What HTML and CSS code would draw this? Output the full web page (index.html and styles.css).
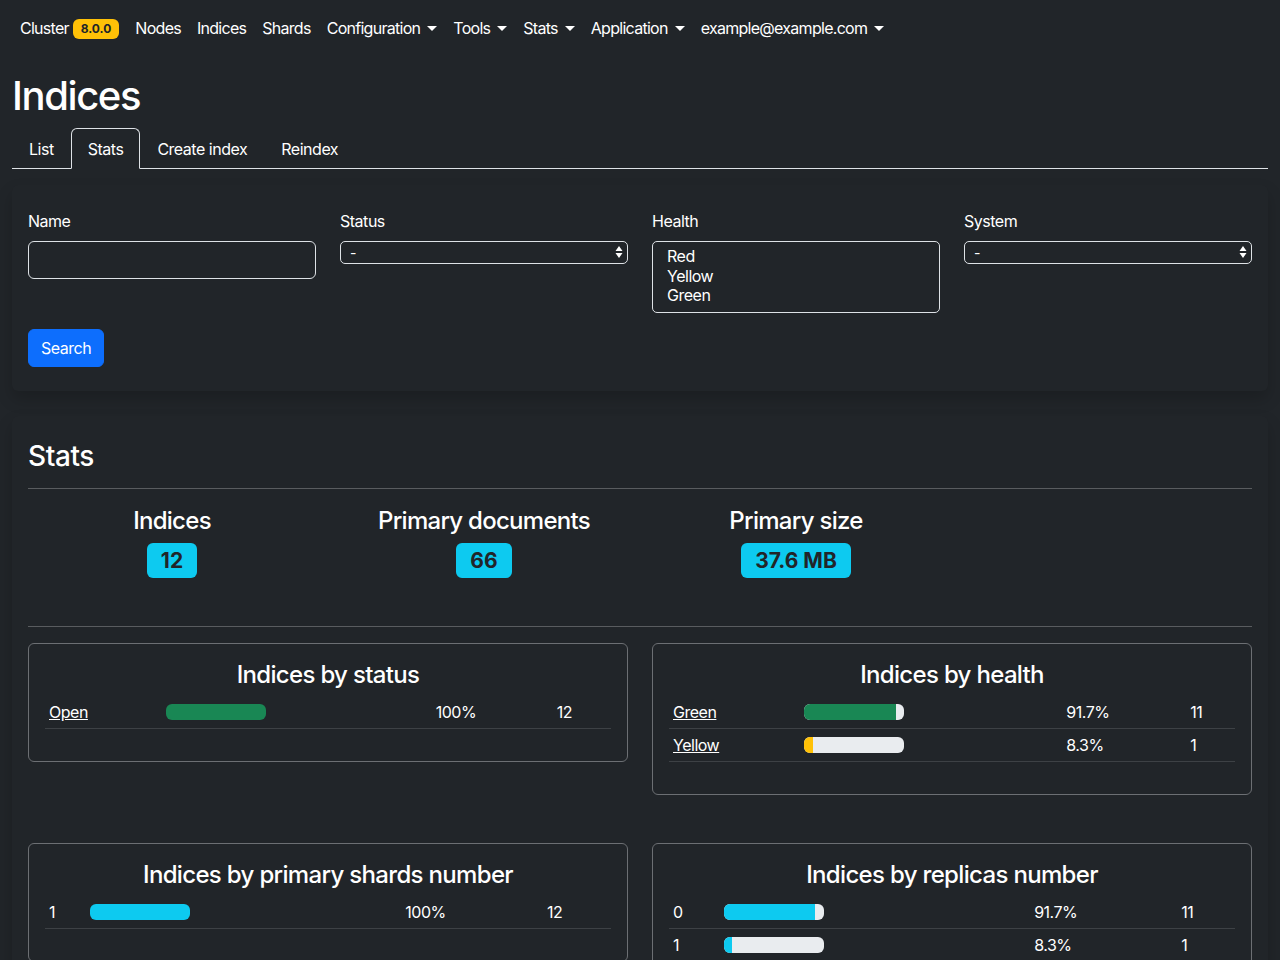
FILE: index.html
```html
<!DOCTYPE html>
<html lang="en">
<head>
<meta charset="utf-8">
<title>Indices - Stats</title>
<link rel="stylesheet" href="styles.css">
</head>
<body>
<nav class="navbar">
  <ul class="nav-list">
    <li><a class="nav-link" href="#">Cluster <span class="badge badge-warning">8.0.0</span></a></li>
    <li><a class="nav-link" href="#">Nodes</a></li>
    <li><a class="nav-link" href="#">Indices</a></li>
    <li><a class="nav-link" href="#">Shards</a></li>
    <li><a class="nav-link dropdown-toggle" href="#">Configuration</a></li>
    <li><a class="nav-link dropdown-toggle" href="#">Tools</a></li>
    <li><a class="nav-link dropdown-toggle" href="#">Stats</a></li>
    <li><a class="nav-link dropdown-toggle" href="#">Application</a></li>
    <li><a class="nav-link dropdown-toggle" href="#">example@example.com</a></li>
  </ul>
</nav>

<main class="container">
  <h1 class="page-title">Indices</h1>
  <ul class="nav-tabs">
    <li><a class="tab-link" href="#">List</a></li>
    <li><a class="tab-link active" href="#">Stats</a></li>
    <li><a class="tab-link" href="#">Create index</a></li>
    <li><a class="tab-link" href="#">Reindex</a></li>
  </ul>

  <section class="card card-form">
    <form class="filter-form">
      <div class="form-row">
        <div class="field">
          <label class="form-label" for="name">Name</label>
          <input class="form-control" id="name" type="text">
        </div>
        <div class="field">
          <label class="form-label" for="status">Status</label>
          <div class="select-wrap">
            <select class="native-select" id="status"><option>-</option><option>Open</option><option>Close</option></select>
            <svg class="select-arrows" width="8" height="14" viewBox="0 0 8 14" aria-hidden="true"><path d="M4 1 L7.5 6 L0.5 6 Z M0.5 8 L7.5 8 L4 13 Z" fill="#fff"/></svg>
          </div>
        </div>
        <div class="field">
          <label class="form-label">Health</label>
          <div class="listbox" role="listbox" aria-multiselectable="true">
            <div class="listbox-option" role="option">Red</div>
            <div class="listbox-option" role="option">Yellow</div>
            <div class="listbox-option" role="option">Green</div>
          </div>
        </div>
        <div class="field">
          <label class="form-label" for="system">System</label>
          <div class="select-wrap">
            <select class="native-select" id="system"><option>-</option><option>Yes</option><option>No</option></select>
            <svg class="select-arrows" width="8" height="14" viewBox="0 0 8 14" aria-hidden="true"><path d="M4 1 L7.5 6 L0.5 6 Z M0.5 8 L7.5 8 L4 13 Z" fill="#fff"/></svg>
          </div>
        </div>
      </div>
      <button class="btn-primary" type="button">Search</button>
    </form>
  </section>

  <section class="card card-stats">
    <h3 class="section-title">Stats</h3>
    <hr class="divider divider-top">
    <div class="stats-row">
      <div class="stat">
        <h4 class="stat-label">Indices</h4>
        <span class="badge badge-info">12</span>
      </div>
      <div class="stat">
        <h4 class="stat-label">Primary documents</h4>
        <span class="badge badge-info">66</span>
      </div>
      <div class="stat">
        <h4 class="stat-label">Primary size</h4>
        <span class="badge badge-info">37.6 MB</span>
      </div>
    </div>
    <hr class="divider">

    <div class="charts">
      <div class="chart-card">
        <h4 class="chart-title">Indices by status</h4>
        <table class="table-sm">
          <tbody>
            <tr><td><a href="#">Open</a></td><td><div class="progress"><div class="bar bar-success" style="width:100%"></div></div></td><td>100%</td><td>12</td></tr>
          </tbody>
        </table>
      </div>
      <div class="chart-card">
        <h4 class="chart-title">Indices by health</h4>
        <table class="table-sm">
          <tbody>
            <tr><td><a href="#">Green</a></td><td><div class="progress"><div class="bar bar-success" style="width:91.7%"></div></div></td><td>91.7%</td><td>11</td></tr>
            <tr><td><a href="#">Yellow</a></td><td><div class="progress"><div class="bar bar-warning" style="width:8.3%"></div></div></td><td>8.3%</td><td>1</td></tr>
          </tbody>
        </table>
      </div>
      <div class="chart-card">
        <h4 class="chart-title">Indices by primary shards number</h4>
        <table class="table-sm">
          <tbody>
            <tr><td>1</td><td><div class="progress"><div class="bar bar-info" style="width:100%"></div></div></td><td>100%</td><td>12</td></tr>
          </tbody>
        </table>
      </div>
      <div class="chart-card">
        <h4 class="chart-title">Indices by replicas number</h4>
        <table class="table-sm">
          <tbody>
            <tr><td>0</td><td><div class="progress"><div class="bar bar-info" style="width:91.7%"></div></div></td><td>91.7%</td><td>11</td></tr>
            <tr><td>1</td><td><div class="progress"><div class="bar bar-info" style="width:8.3%"></div></div></td><td>8.3%</td><td>1</td></tr>
          </tbody>
        </table>
      </div>
    </div>
  </section>
</main>
</body>
</html>
```

FILE: styles.css
```css
* { box-sizing: border-box; }

html, body {
  margin: 0;
  padding: 0;
}

body {
  background: #212529;
  color: #fff;
  font-family: Inter, "Noto Sans", "Liberation Sans", sans-serif;
  font-size: 16px;
  line-height: 24px;
  letter-spacing: -0.03em;
}

a { color: inherit; }

/* Navbar */
.navbar {
  height: 56px;
  padding: 8px 12px;
  display: flex;
  align-items: center;
}
.nav-list {
  list-style: none;
  margin: 0;
  padding: 0;
  display: flex;
  align-items: center;
}
.nav-link {
  display: block;
  padding: 8px;
  color: #fff;
  text-decoration: none;
  line-height: 24px;
  letter-spacing: -0.045em;
}
.dropdown-toggle::after {
  content: "";
  display: inline-block;
  margin-left: 7px;
  vertical-align: 3px;
  border-top: 5px solid #fff;
  border-left: 5px solid transparent;
  border-right: 5px solid transparent;
}

.badge {
  display: inline-block;
  font-weight: 700;
  line-height: 1;
  border-radius: 6px;
  text-align: center;
  white-space: nowrap;
  letter-spacing: 0;
}
.badge-warning {
  background: #ffc107;
  color: #212529;
  font-size: 12px;
  padding: 4px 8px;
  vertical-align: 1px;
}
.badge-info {
  background: #0dcaf0;
  color: #212529;
  font-size: 21px;
  padding: 7px 14px;
}

/* Container */
.container {
  padding: 0 12px;
}
.page-title {
  margin: 16px 0 8px;
  font-size: 40px;
  line-height: 48px;
  font-weight: 500;
  letter-spacing: -0.035em;
}

.nav-tabs {
  list-style: none;
  margin: 0;
  padding: 0;
  display: flex;
  border-bottom: 1px solid #dee2e6;
}
.tab-link {
  display: block;
  padding: 8px 16px 7px;
  margin-bottom: -1px;
  border: 1px solid transparent;
  border-top-left-radius: 6px;
  border-top-right-radius: 6px;
  text-decoration: none;
  color: #fff;
}
.tab-link.active {
  border-color: #dee2e6 #dee2e6 #212529;
  background: #212529;
}

/* Cards */
.card {
  background: #212529;
  border-radius: 6px;
  box-shadow: 0 8px 16px rgba(0, 0, 0, 0.18);
}
.card-form {
  margin-top: 16px;
  padding: 24px 16px;
}
.form-row {
  display: grid;
  grid-template-columns: repeat(4, 1fr);
  column-gap: 24px;
  align-items: start;
}
.field {
  margin-bottom: 16px;
}
.form-label {
  display: block;
  margin-bottom: 8px;
}
.form-control {
  display: block;
  width: 100%;
  height: 38px;
  border: 1px solid #dee2e6;
  border-radius: 6px;
  background: #212529;
  color: #fff;
  font: inherit;
  padding: 6px 12px;
}
.select-wrap {
  position: relative;
  height: 23px;
}
.native-select {
  display: block;
  appearance: none;
  -webkit-appearance: none;
  width: 100%;
  height: 23px;
  border: 1px solid #dee2e6;
  border-radius: 5px;
  background: #212529;
  color: #fff;
  font-family: inherit;
  font-size: 14px;
  padding: 0 9px;
  line-height: 21px;
}
.select-arrows {
  position: absolute;
  right: 5px;
  top: 4px;
  pointer-events: none;
}
.listbox {
  height: 72px;
  border: 1px solid #dee2e6;
  border-radius: 5px;
  padding: 5px 14px;
}
.listbox-option {
  line-height: 19.5px;
  font-size: 16px;
}
.btn-primary {
  display: inline-block;
  background: #0d6efd;
  color: #fff;
  border: 1px solid #0d6efd;
  border-radius: 6px;
  font: inherit;
  letter-spacing: inherit;
  line-height: 24px;
  padding: 6px 12px;
}

/* Stats */
.card-stats {
  margin-top: 25px;
  padding: 24px 16px;
}
.section-title {
  margin: 0;
  font-size: 28px;
  line-height: 33.6px;
  font-weight: 500;
  letter-spacing: -0.015em;
}
.divider {
  margin: 16px 0;
  border: 0;
  border-top: 1px solid #595c5f;
}
.divider-top {
  margin: 14px 0 18px;
}
.stats-row {
  display: grid;
  grid-template-columns: repeat(4, 1fr);
  column-gap: 24px;
}
.stat {
  text-align: center;
  padding-bottom: 32px;
}
.stat-label {
  margin: 0 0 8px;
  font-size: 24px;
  line-height: 28.8px;
  font-weight: 500;
  letter-spacing: -0.03em;
}

.charts {
  display: grid;
  grid-template-columns: 1fr 1fr;
  column-gap: 24px;
  row-gap: 48px;
  align-items: start;
}
.chart-card {
  border: 1px solid #6c6f73;
  border-radius: 6px;
  padding: 17px 16px 16px;
}
.chart-title {
  margin: 0 0 6px;
  text-align: center;
  font-size: 24px;
  line-height: 28.8px;
  font-weight: 500;
  letter-spacing: -0.028em;
}
.table-sm {
  width: 100%;
  border-collapse: collapse;
  margin-bottom: 16px;
}
.table-sm td {
  padding: 4px;
  border-bottom: 1px solid #3d4145;
  vertical-align: middle;
  line-height: 24px;
}
.progress {
  display: flex;
  width: 100px;
  height: 16px;
  background: #e9ecef;
  border-radius: 6px;
  overflow: hidden;
}
.bar { height: 100%; }
.bar-success { background: #198754; }
.bar-warning { background: #ffc107; }
.bar-info { background: #0dcaf0; }
```
